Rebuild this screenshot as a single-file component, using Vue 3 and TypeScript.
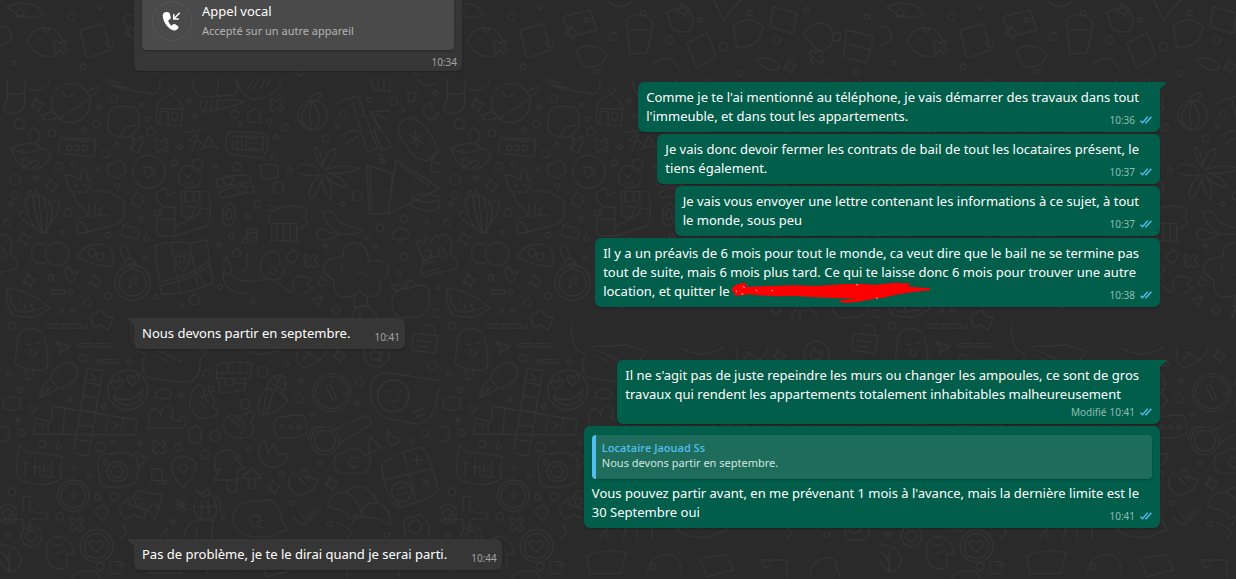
<script setup lang="ts">
interface Message {
  id: number
  side: 'in' | 'out'
  time: string
  lines?: string[]
  call?: { title: string; detail: string }
  quote?: { author: string; text: string }
  first?: boolean
  edited?: boolean
  redacted?: boolean
}

const messages: Message[] = [
  { id: 1, side: 'in', time: '10:34', first: true, call: { title: 'Appel vocal', detail: 'Accepté sur un autre appareil' } },
  {
    id: 2, side: 'out', time: '10:36', first: true,
    lines: ["Comme je te l'ai mentionné au téléphone, je vais démarrer des travaux dans tout", "l'immeuble, et dans tout les appartements."],
  },
  {
    id: 3, side: 'out', time: '10:37',
    lines: ['Je vais donc devoir fermer les contrats de bail de tout les locataires présent, le', 'tiens également.'],
  },
  {
    id: 4, side: 'out', time: '10:37',
    lines: ['Je vais vous envoyer une lettre contenant les informations à ce sujet, à tout', 'le monde, sous peu'],
  },
  {
    id: 5, side: 'out', time: '10:38', redacted: true,
    lines: [
      'Il y a un préavis de 6 mois pour tout le monde, ca veut dire que le bail ne se termine pas',
      'tout de suite, mais 6 mois plus tard. Ce qui te laisse donc 6 mois pour trouver une autre',
      'location, et quitter le',
    ],
  },
  { id: 6, side: 'in', time: '10:41', first: true, lines: ['Nous devons partir en septembre.'] },
  {
    id: 7, side: 'out', time: '10:41', first: true, edited: true,
    lines: ["Il ne s'agit pas de juste repeindre les murs ou changer les ampoules, ce sont de gros", 'travaux qui rendent les appartements totalement inhabitables malheureusement'],
  },
  {
    id: 8, side: 'out', time: '10:41',
    quote: { author: 'Locataire Jaouad Ss', text: 'Nous devons partir en septembre.' },
    lines: ["Vous pouvez partir avant, en me prévenant 1 mois à l'avance, mais la dernière limite est le", '30 Septembre oui'],
  },
  { id: 9, side: 'in', time: '10:44', first: true, lines: ['Pas de problème, je te le dirai quand je serai parti.'] },
]

const dots: [number, number, number][] = [
  [58, 372, 16], [155, 399, 11], [289, 372, 11], [342, 296, 12], [297, 320, 7], [424, 314, 6], [443, 357, 7], [452, 395, 12],
  [252, 390, 7], [349, 436, 7], [317, 460, 12], [176, 499, 11], [220, 494, 7], [293, 508, 6], [45, 539, 16], [107, 535, 7],
  [45, 586, 11], [32, 612, 6], [20, 669, 11], [203, 638, 12], [352, 557, 7], [424, 656, 7], [472, 638, 10], [323, 706, 8],
  [187, 698, 6], [440, 716, 7], [435, 774, 6], [152, 833, 8], [324, 888, 11], [263, 909, 11], [185, 930, 6], [217, 930, 6],
  [469, 891, 7], [545, 918, 6], [583, 900, 15], [660, 860, 7], [657, 736, 7], [710, 759, 12], [695, 708, 8], [743, 648, 6],
  [772, 612, 11], [835, 562, 16], [870, 510, 7], [820, 470, 7], [828, 412, 7], [855, 382, 11], [808, 364, 7], [705, 342, 12],
  [720, 372, 6], [567, 303, 7], [584, 348, 6], [540, 440, 7], [522, 489, 9], [711, 501, 12], [646, 498, 6], [760, 905, 7],
  [1030, 342, 11], [1013, 380, 6], [977, 416, 11], [1108, 300, 7], [1181, 304, 12], [1210, 328, 6], [1307, 280, 7],
  [1142, 470, 7], [1148, 484, 6], [1072, 587, 15], [1028, 612, 6], [1140, 683, 11], [1212, 657, 11], [1281, 664, 6],
  [1098, 713, 6], [1124, 739, 6], [1212, 770, 11], [1197, 818, 7], [966, 846, 12], [1315, 862, 6], [1312, 940, 12], [976, 739, 6],
  [35, 978, 11], [249, 1075, 11], [295, 1085, 6], [387, 1085, 7], [25, 1120, 7], [60, 1170, 8], [208, 1199, 7], [97, 1225, 11],
  [312, 1220, 7], [55, 1260, 6], [64, 1298, 10], [127, 1333, 11], [176, 1340, 7], [302, 1341, 15], [340, 1328, 6], [420, 1328, 6],
  [534, 1341, 11], [545, 1186, 7], [620, 1122, 12], [633, 1167, 8], [736, 1213, 15], [788, 1115, 16], [645, 1308, 16],
  [860, 1091, 7], [904, 1143, 6], [895, 1194, 14], [937, 1243, 7], [1078, 1147, 12], [1072, 1209, 7], [747, 1346, 7],
  [616, 1363, 13], [844, 1422, 7], [36, 1475, 11], [222, 1405, 6], [268, 1426, 6], [294, 1491, 9], [343, 1490, 12],
  [179, 1550, 11], [24, 1605, 7], [519, 1567, 7], [669, 1552, 6], [878, 1509, 7], [989, 1573, 7], [1160, 1605, 8],
  [960, 1391, 6], [1275, 1300, 11], [1235, 1324, 6], [1298, 1099, 14], [35, 1550, 10], [1190, 1510, 8],
  [60, 40, 12], [140, 90, 7], [215, 50, 11], [300, 20, 7], [330, 130, 11], [440, 60, 7], [520, 110, 12], [610, 40, 8],
  [690, 120, 11], [780, 60, 7], [850, 140, 12], [930, 40, 7], [1010, 120, 11], [1100, 30, 7], [1190, 110, 12], [1280, 50, 8],
  [40, 190, 7], [250, 200, 8], [470, 215, 7], [900, 220, 8], [1250, 215, 9], [300, 1700, 11], [640, 1700, 8], [980, 1690, 12],
]

const sparks: [number, number][] = [
  [112, 316], [155, 558], [73, 716], [88, 842], [286, 845], [1018, 1068], [822, 1463], [994, 1450], [395, 100], [730, 30], [1050, 200],
]

const crosses: [number, number][] = [
  [485, 436], [830, 315], [932, 783], [477, 1342], [230, 1573], [180, 140], [1130, 170],
]
</script>

<template>
  <main class="chat">
    <svg class="wallpaper" aria-hidden="true">
      <defs>
        <pattern id="doodles" width="440" height="579" patternUnits="userSpaceOnUse" viewBox="0 0 1320 1737">
          <g class="doodle">
            <circle v-for="(d, i) in dots" :key="'d' + i" :cx="d[0]" :cy="d[1]" :r="d[2]" />
            <path
              v-for="(s, i) in sparks"
              :key="'s' + i"
              :transform="`translate(${s[0]} ${s[1]})`"
              d="M-4-22Q0-8 20-4Q8 2 5 20Q-2 7-20 4Q-8-4-4-22Z"
            />
            <path
              v-for="(c, i) in crosses"
              :key="'c' + i"
              :transform="`translate(${c[0]} ${c[1]})`"
              d="M-14-20L0-10L12-20L20-12L11 0L22 12L12 20L0 11L-12 21L-20 12L-11 0L-22-12Z"
            />
            <g transform="translate(0 240)">
              <path d="M22 0V50Q20 65 12 80Q10 102 35 101Q65 98 74 75L75 0M22 40Q45 48 73 38M80 22Q105 42 145 15L148 0" />
              <circle cx="213" cy="69" r="58" />
              <path d="M268 30Q295 18 298 24Q280 55 180 112Q130 125 126 115Q130 100 158 94M187 35Q205 65 225 35M155 94L185 118" />
              <path d="M335 85Q365 75 405 83Q422 105 418 140Q412 152 385 172Q350 176 325 152Q318 110 335 85ZM362 170Q370 140 390 138Q410 135 418 130" />
              <path d="M318 5Q360 30 400 32L465 42Q485 20 480 0M340 15L385 25M325 0L365 12" />
              <path d="M470 85L468 130L542 140L548 88ZM470 85Q465 65 510 42Q545 60 550 88M510 42L505 30L520 22L530 32L512 42M480 130V95H505V132M515 100H532V120H515Z" />
              <path d="M580 0Q575 40 610 52L700 45Q720 30 708 0M655 0L652 45M605 60Q595 90 612 96Q690 85 732 65Q700 55 655 60M620 60L615 92M635 60L632 90M650 60V85" />
              <path d="M710 0Q720 40 755 58Q815 58 838 15L842 0M745 25L755 5M760 25L775 0M780 25L795 0M800 22L810 0" />
              <path d="M35 205Q45 260 95 268Q145 260 152 225Q145 210 125 205Q110 190 100 190Q60 190 35 205Q70 230 125 205M90 175Q80 155 103 142Q125 160 117 178L107 190H95ZM65 240L80 232L92 248L76 260ZM95 250Q105 230 118 248Q112 262 98 262" />
              <path d="M182 172L285 178Q290 200 280 230L178 220Q172 195 182 172ZM188 178L275 185M200 203a8 8 0 1 0 16 0a8 8 0 1 0-16 0M223 203a8 8 0 1 0 16 0a8 8 0 1 0-16 0M247 203a8 8 0 1 0 16 0a8 8 0 1 0-16 0" />
              <path d="M395 170L410 180L425 168L428 188L415 218L390 208L402 195ZM555 158L615 147M575 145L590 160L565 185M595 165L575 215M590 180L605 190M605 210L625 168L655 210M615 200H638" />
              <path d="M690 155Q675 165 677 200Q680 225 705 225L785 235Q805 215 805 185Q803 162 780 158ZM698 168L790 170L788 212L700 208ZM710 172V205M725 172V205M710 188H725M738 174V207M748 174L772 177M750 190H768M750 206H772" />
              <path d="M325 255Q332 245 345 252Q355 235 368 248Q380 255 375 270Q380 285 362 288Q350 300 340 288Q320 290 325 272Z" />
              <circle cx="447" cy="275" r="49" />
              <path d="M430 262Q450 258 467 272Q455 290 438 292Q435 278 430 262Z" />
              <path d="M195 285L215 288L240 300L245 268Q258 260 262 300L272 300Q275 330 250 338Q215 335 208 328ZM220 340Q220 365 250 385L265 408M275 332Q350 330 372 370Q380 420 345 435L235 462Q225 425 240 415Q300 400 325 405M268 375V402M285 372V402M300 402Q300 380 318 376M240 425Q265 435 260 455M222 315L234 318M247 318L258 315" />
              <circle cx="569" cy="290" r="34" /><circle cx="592" cy="254" r="16" />
              <path d="M545 335H620Q635 340 630 400Q635 430 615 440L525 468H475Q465 450 472 410Q475 385 495 382Q470 370 468 350Q475 325 495 325Q505 330 502 350L525 335M545 335Q540 375 550 380H590L600 335M555 335V365H582V335M545 380Q540 410 560 415Q585 410 582 380M600 340V400L525 440M500 380L525 382V460M472 420L525 415M600 385H630M555 285L565 292L575 282M555 305Q570 315 582 305" />
              <path d="M650 300Q680 285 745 285Q758 292 750 305L660 322Q645 312 650 300ZM655 338Q700 315 760 320Q765 330 760 335L670 353Q655 350 655 338M670 300a14 14 0 1 0 28 0a14 14 0 1 0-28 0M712 328a14 14 0 1 0 28 0a14 14 0 1 0-28 0" />
              <path d="M780 258Q805 250 832 258L835 290Q810 300 785 297Q785 280 780 258ZM743 100L765 85L782 92L780 128L745 125Z" />
              <path d="M395 355L412 338L435 358L415 382L395 370ZM370 435L418 448L412 478L362 465Z" />
              <path d="M80 345L90 330L100 340L105 328L115 345M75 360Q85 440 128 460Q160 440 155 380Q135 345 105 345Q85 345 75 360ZM100 350Q105 420 128 460M128 352Q150 400 138 460M75 395Q55 390 58 405Q75 435 105 438M155 365Q175 355 177 370Q175 410 153 425M128 460L115 350" />
              <path d="M668 400Q670 370 690 370Q710 385 705 410Q700 435 682 437Q665 435 668 400ZM678 400Q680 385 690 385Q700 400 693 415Q685 425 680 415Z" />
              <path d="M805 430H895M808 480L895 485M815 430V475M830 432V478M850 435V480M870 435V480M890 435V480M808 425Q800 395 850 380Q880 375 900 382M805 375L830 382M800 392L835 388" />
              <path d="M740 450L772 445L770 480M740 450L742 482M727 482a8 8 0 1 0 16 0a8 8 0 1 0-16 0M755 480a8 8 0 1 0 16 0a8 8 0 1 0-16 0M740 462L771 457" />
              <path d="M0 465Q30 460 35 490L30 515L52 545V565L0 578M0 500Q20 510 18 530L0 535" />
              <path d="M135 495Q110 480 98 505Q88 530 105 545Q120 555 138 547" />
              <circle cx="172" cy="522" r="35" />
              <path d="M230 530Q260 480 320 497Q345 515 338 550Q335 560 315 558Q260 550 230 530ZM265 518a12 12 0 1 0 24 0a12 12 0 1 0-24 0M290 530a11 11 0 1 0 22 0a11 11 0 1 0-22 0" />
              <path d="M362 500Q370 490 380 502L390 535Q380 545 372 535Q358 520 362 500ZM375 550Q380 535 395 538Q410 545 408 560" />
              <circle cx="398" cy="608" r="53" /><circle cx="398" cy="608" r="40" />
              <path d="M388 625L390 602L410 588L408 610ZM388 556a8 8 0 1 0 16 0a8 8 0 1 0-16 0" />
              <path d="M465 498Q510 480 570 490L620 480L638 610Q600 625 545 640L485 642Q470 570 465 498ZM512 488L540 640M568 490L585 570L620 622M480 605Q560 595 625 545M485 615Q560 605 630 555M548 575Q515 540 535 520Q555 508 570 530Q570 555 548 575ZM538 538a10 10 0 1 0 20 0a10 10 0 1 0-20 0M585 570L592 615" />
              <path d="M670 550L678 530L690 555Q700 580 685 582Q670 582 670 560V600Q680 640 745 640M692 580Q700 600 745 605L790 600Q810 590 850 620Q880 650 885 625Q865 605 900 585M740 520V565Q735 580 725 570M780 555Q790 510 825 515Q845 530 838 555L855 565L840 595Q820 605 800 595L785 585ZM810 572a10 10 0 1 0 20 0a10 10 0 1 0-20 0M860 525L880 508L897 525L880 550L858 540Z" />
              <path d="M195 570L205 558L215 578L235 575L215 608L200 595ZM155 630H195V642H155ZM205 638a7 7 0 1 0 14 0a7 7 0 1 0-14 0" />
              <path d="M25 625Q10 660 38 705Q75 715 110 710L150 685Q100 635 25 625ZM32 638Q25 670 55 695Q90 700 130 682M55 655L62 668M75 668V680M92 672L100 690M72 690L80 680" />
            </g>
            <g transform="translate(900 240)">
              <circle cx="38" cy="105" r="44" />
              <path d="M38 62Q0 80 8 130L38 150Q75 130 38 62ZM38 62Q20 100 38 150M30 58Q35 42 60 38L65 45L48 60M215 0L220 30L270 35V0M235 0V30M252 0V30M355 0Q380 28 410 5" />
              <path d="M105 75Q130 55 175 48L232 205L202 217L155 60M180 108L195 102M195 162L212 155M210 95L275 200L245 212L222 150L240 148L210 95L270 92M215 100L260 118M130 165Q155 148 180 155M140 190L178 165" />
              <path d="M395 68Q370 70 370 95Q375 120 400 118L418 98Q395 102 395 68ZM323 38L348 40L340 62L325 65Z" />
              <path d="M295 140Q310 110 340 115Q385 135 412 205Q400 235 380 242Q340 240 315 190Q290 165 295 140ZM385 240L415 205M395 240L420 212L432 228M330 165L370 190M345 150L350 200M332 190L370 160" />
              <path d="M68 265Q35 220 48 198Q65 215 68 265Q75 215 105 205Q115 225 75 270Q120 250 178 265Q145 285 80 278Q130 290 142 322Q105 320 75 285Q100 310 93 360Q65 330 66 290Q55 350 30 358Q20 320 60 285Q25 290 0 280M60 272Q30 245 0 255" />
              <path d="M200 255L278 280L265 400L208 402ZM288 238L420 325L265 402ZM300 255L390 320M210 270L215 395M335 350Q370 335 420 350Q425 385 400 392Q360 395 335 375ZM340 355Q370 375 415 360M395 250Q405 240 415 250Q435 265 415 277Q390 275 392 265Z" />
              <path d="M70 395Q100 385 110 415Q120 435 190 450Q165 470 120 460Q80 490 55 475Q40 455 65 445Q95 465 120 460Q75 440 70 395ZM0 380Q30 385 15 410L22 430L0 445M278 460Q300 435 320 450Q335 465 318 477Q290 485 278 475Z" />
              <path d="M130 530Q125 495 160 488Q205 490 205 545Q240 530 265 560Q270 595 235 605Q255 640 215 650Q185 650 180 630Q165 655 125 650Q95 640 103 600Q70 590 72 555Q85 530 125 532ZM130 580Q120 560 130 550M165 585Q185 570 205 590M165 645L160 680H205L200 645M155 720Q160 680 190 675Q225 690 235 720M180 720V690" />
              <path d="M350 492L355 480L372 492L378 470L392 485L410 465L425 478L450 465L455 515L372 540L350 492M372 540L362 580L372 590L470 560Q470 540 458 520M372 515Q385 500 395 520L375 550L405 545M418 505L412 530L440 525M432 505V545M370 580L465 550" />
              <path d="M330 625Q360 605 385 625Q395 660 380 690Q370 715 330 710Q295 725 278 690Q270 650 290 635Q310 620 330 625ZM320 622L315 605L340 602M315 625Q275 640 275 615Q305 612 315 625" />
              <path d="M0 590L35 595L20 615L42 625L0 645M38 655L68 650L55 678ZM95 690L110 678L122 690L108 705Z" />
            </g>
            <g transform="translate(0 930)">
              <path d="M45 160L55 75Q75 45 120 62Q145 90 143 170Q135 185 95 180Q55 175 45 160ZM75 180L82 210Q100 208 102 180M88 128a10 10 0 1 0 20 0a10 10 0 1 0-20 0M80 105H92M108 100H118" />
              <path d="M145 43H190V55H145ZM198 43H243V55H198ZM250 50a6 6 0 1 0 12 0M235 100H275V112H235ZM285 100H330V112H285ZM310 148H355V160H310ZM165 95L210 110L180 130L185 112ZM270 20L305 0L320 20L340 25L325 60L300 45L282 55Z" />
              <path d="M118 265Q130 215 150 205L175 235ZM150 205Q165 165 205 155Q240 170 230 205Q205 230 175 235M118 265L148 235" />
              <path d="M262 175L308 182L265 438L220 430ZM255 218L300 225M248 258L293 265M240 300L287 308M235 345L280 350M228 388L272 395M155 288L412 330L405 375L100 372L108 325L155 335ZM195 295L188 375M325 320L318 362M370 325L363 370M145 330V370M270 190L290 205L272 212M112 342H130V355M335 335L355 345L335 358" />
              <circle cx="383" cy="240" r="60" />
              <path d="M350 238Q325 220 340 210L352 218L362 205Q378 215 350 238ZM398 228Q372 208 388 195L400 205L412 193Q428 205 398 228ZM340 255Q380 290 430 240Q425 285 380 285Q345 280 340 255Z" />
              <path d="M395 40Q390 70 400 95Q410 130 435 130Q420 175 440 200Q500 215 565 218Q605 200 600 150L620 125L560 105L455 110M475 122L545 155M465 135L510 158" />
              <path d="M650 165Q690 150 755 160L752 205H650ZM650 190H755M685 160V190M720 158V190M655 205L660 250L735 240V205M675 205V225H700V205M705 205V220H740" />
              <path d="M890 115Q885 165 915 175Q975 150 985 110M915 125L960 150M910 150L930 125M725 115Q790 150 850 112" />
              <path d="M775 290Q780 240 805 235Q860 250 862 275Q835 310 790 315Q770 305 775 290ZM800 235Q810 195 845 195Q870 215 845 255M815 220L850 240M825 205L858 225M840 200L825 240M800 240L790 310M820 245L800 310" />
              <path d="M570 290Q570 240 595 222L615 235L605 265L630 250L645 275L635 290Q660 300 650 315Q610 335 585 315ZM610 250L625 280M600 275L615 290" />
              <path d="M670 340Q680 305 720 320L750 305Q775 315 750 335Q770 350 755 375Q720 395 690 378Q668 365 670 340ZM690 325L720 350M705 315L735 345M720 375L740 350" />
              <path d="M445 355L450 330Q440 300 465 295Q480 300 482 315Q485 285 510 285Q525 300 515 325L540 335L545 315L560 335L550 355ZM465 260Q465 245 485 240Q495 225 510 245Q520 255 505 265Q480 270 465 260ZM565 362L590 345L605 365L600 400L570 398Z" />
              <circle cx="995" cy="248" r="57" /><circle cx="995" cy="248" r="48" />
              <path d="M975 230L990 222L1010 265L998 272L985 240ZM995 205V215M1035 248H1028M960 248H952" />
              <path d="M1110 240Q1115 190 1165 188L1335 215Q1310 235 1310 270Q1305 330 1250 342L1160 325Q1110 300 1110 240Z" />
              <circle cx="1180" cy="258" r="48" />
              <path d="M1135 258a45 45 0 1 1 80 25M1160 245H1170M1195 245H1205M1160 270Q1180 285 1200 265M1235 310L1270 295M1245 325L1275 310" />
              <circle cx="1130" cy="132" r="38" />
              <path d="M1110 132L1125 115L1130 128L1148 125L1138 140L1145 155L1128 145L1115 150ZM1240 70L1315 78L1305 130L1235 120ZM1265 65Q1270 35 1300 48L1305 75M1255 90L1295 98M1255 108L1290 112" />
              <path d="M825 330Q830 318 905 315Q925 325 918 370Q905 385 835 385Q815 370 825 330ZM840 350a6 6 0 1 0 12 0a6 6 0 1 0-12 0M865 350a6 6 0 1 0 12 0a6 6 0 1 0-12 0M892 350a6 6 0 1 0 12 0a6 6 0 1 0-12 0" />
              <circle cx="975" cy="392" r="42" /><circle cx="975" cy="392" r="31" />
              <path d="M1000 360L1095 318Q1120 325 1110 345L1018 400M925 390Q925 345 970 350M1105 430L1110 380L1145 415ZM1165 360Q1155 390 1175 405Q1195 405 1202 385Q1175 390 1165 360Z" />
              <path d="M10 270Q10 255 60 265L62 295Q40 305 10 295ZM0 350Q30 345 30 375Q25 400 0 392" />
              <path d="M60 405L80 425Q130 430 188 440Q185 460 180 470L185 505Q140 540 60 510Q40 480 60 405ZM75 455V500M65 458H88M105 450V495M100 470H120V500M132 460V500L155 502V455M132 480H155" />
              <path d="M295 445Q305 430 335 432L365 425L410 440Q420 500 405 520Q350 540 305 525Q290 480 295 445ZM395 440L410 425L430 440L445 445L425 460L415 478" />
              <circle cx="352" cy="485" r="30" /><circle cx="352" cy="485" r="18" /><circle cx="317" cy="457" r="7" />
              <path d="M550 532Q500 480 520 450Q550 425 585 455Q600 480 550 532ZM538 475a12 12 0 1 0 24 0a12 12 0 1 0-24 0M455 478H487V512H455ZM478 512H498V522H478" />
              <path d="M645 440Q665 415 695 422L725 445L700 440L735 475Q700 475 715 510L640 510L660 475L645 480ZM680 515L685 545H710V515M725 505L755 475L785 505ZM745 508V535H765V508" />
              <path d="M775 430Q775 400 795 390L805 430L820 400L835 435L865 430Q860 465 830 470Q790 480 775 430ZM865 520Q865 485 895 490L920 475L925 500L955 510Q945 550 895 555Q870 545 865 520ZM895 500L915 525M910 495L930 515" />
              <path d="M1003 450Q1005 430 1030 430Q1050 410 1080 420Q1095 440 1110 440Q1115 475 1090 490H1020Q995 475 1003 450ZM1075 445Q1050 435 1045 460Q1055 480 1075 468" />
              <path d="M1145 470Q1150 440 1260 412Q1285 415 1315 540Q1310 560 1200 592Q1165 595 1145 470ZM1210 430L1250 575M1155 510L1300 475M1175 545a30 30 0 1 0 60 0a30 30 0 1 0-60 0M1235 450H1265M1250 435V465M1265 505L1290 530M1290 505L1265 530M1190 538L1220 530M1190 555L1220 547" />
              <circle cx="220" cy="557" r="47" /><circle cx="220" cy="557" r="37" />
              <path d="M208 560L220 545V565L235 548M70 560H90V605L143 610V625L90 628V655H68V628L0 630M68 605L70 560M282 605L305 585L325 600L312 635Z" />
              <path d="M355 595L385 565L390 585L440 600L435 625L400 615L375 630ZM395 570L410 542L487 555L465 630L445 600M405 575a11 11 0 1 0 22 0a11 11 0 1 0-22 0M435 610L460 580L478 595" />
              <path d="M525 585L560 585M545 565V605M530 570L558 600M558 570L532 600M585 540L605 550L625 535L630 555L610 560ZM590 565Q570 610 600 625H640Q660 605 640 565M605 570V620M625 570V620M590 590H650M640 555Q670 570 660 600M550 690Q555 640 590 630L640 632Q635 660 635 690M590 690V650" />
              <path d="M700 640Q695 580 750 575L815 570Q850 600 845 630L865 662Q830 665 815 680Q720 690 700 640ZM750 625Q765 605 780 620Q780 650 760 650Q750 640 750 625ZM770 635L800 630M770 645L790 655" />
              <path d="M880 620L905 645L955 590M900 610L915 622M915 645L965 595M985 590Q985 550 1035 545Q1080 570 1085 620L1070 615L1050 625L1035 605L985 590ZM1040 545Q1070 520 1100 535Q1130 555 1130 580M1085 620Q1085 570 1135 580Q1175 600 1172 645L1130 625L1085 620M1070 620L1055 645M1010 640Q1050 650 1055 670L1040 690" />
              <circle cx="23" cy="612" r="28" /><circle cx="23" cy="612" r="15" /><circle cx="94" cy="678" r="31" /><circle cx="94" cy="678" r="17" />
              <circle cx="290" cy="708" r="49" /><circle cx="290" cy="708" r="37" />
              <path d="M290 725Q260 705 275 690L290 698L305 690Q320 708 290 725ZM0 705Q45 700 65 745Q60 780 30 787M0 725Q30 740 30 787M0 755L15 780M30 715L25 785M140 720Q140 685 175 680Q215 685 222 730L200 735V770Q175 785 150 765Q135 745 140 720ZM160 705H185M165 735L190 725M330 755H365V790H330ZM375 765H350M215 807Q225 775 285 785Q300 795 298 807" />
              <path d="M1210 640Q1215 615 1240 622L1260 610L1285 640Q1295 680 1270 690H1220ZM1225 650a20 20 0 1 0 40 0a20 20 0 1 0-40 0M365 640L380 665L360 690M480 680L500 655V685" />
              <path d="M440 740Q500 710 560 730L540 790H450ZM620 790Q630 730 700 735Q730 760 720 790M780 745L860 735L880 780L800 800ZM960 750H1040V800M1110 790Q1120 740 1180 745L1200 800" />
            </g>
            <path d="M80 120Q120 60 170 95Q210 130 160 170Q100 175 80 120ZM240 90L310 70L330 150L260 175ZM370 50L450 30L470 90L390 110ZM410 150Q450 120 500 160Q490 210 430 200ZM560 60Q600 20 640 70L620 160H570ZM570 90H635M680 40Q740 0 760 60Q760 110 700 90ZM740 130L800 100L830 170L770 205ZM880 80Q920 40 970 80Q960 150 890 140ZM1000 20L1070 40L1060 100L990 80ZM1090 100Q1130 50 1170 80Q1200 150 1130 150ZM1220 90L1300 110L1280 190L1210 170ZM1220 130L1290 150M0 80Q30 70 35 120L0 140M20 20Q100 -10 130 45Q80 70 20 20ZM500 0Q540 40 580 0M820 0L850 60L900 0M640 190Q690 150 720 210M950 180Q990 160 1020 200Q990 230 950 180Z" />
          </g>
        </pattern>
      </defs>
      <rect width="100%" height="100%" fill="url(#doodles)" />
    </svg>

    <ol class="thread">
      <li v-for="m in messages" :key="m.id" class="bubble" :class="[m.side, { first: m.first, edited: m.edited, 'has-call': m.call, 'has-quote': m.quote }]">
        <div v-if="m.call" class="call">
          <span class="call-icon">
            <svg width="20" height="20" viewBox="0 0 20 20" aria-hidden="true">
              <path fill="#fff" d="M3.2 1.2C1.3 1.8.6 3.3.8 5.3c.5 5.300 4 10.900 9 13.500 1.700.9 3.800.9 5.200-.2.900-.7 1.600-1.700 1.400-2.600-.1-.5-.5-.9-.9-1.200l-2.300-1.600c-.8-.5-1.700-.4-2.300.2l-1 .9c-.4.300-.8.200-1.100-.1-1.100-1.100-2-2.600-2.500-4.200-.1-.5 0-.8.400-1l1.200-.7c.7-.4 1-1.200.8-2L7.900 3C7.500 1.400 5.700.5 3.200 1.200Z" />
              <path fill="none" stroke="#fff" stroke-width="1.500" stroke-linecap="round" stroke-linejoin="round" d="M17.300 2.300 11.800 7.800M11.700 3.400V8h4.600" />
            </svg>
          </span>
          <span class="call-text">
            <span class="call-title">{{ m.call.title }}</span>
            <span class="call-detail">{{ m.call.detail }}</span>
          </span>
        </div>
        <blockquote v-if="m.quote" class="quote">
          <cite>{{ m.quote.author }}</cite>
          <p>{{ m.quote.text }}</p>
        </blockquote>
        <p v-if="m.lines" class="text">
          <span v-for="(line, i) in m.lines" :key="i" class="line">
            {{ line }}
            <svg v-if="m.redacted && i === m.lines.length - 1" class="scribble" width="200" height="22" viewBox="450 158 600 66" aria-hidden="true">
              <path fill="#fe0000" d="M450 176L462 166L484 160L494 164L490 172L560 170L640 168L700 170L780 165L830 163L880 166L940 160L988 163L975 171L1000 174L1044 177V183L1000 187L950 195L900 206L868 210L840 216L800 220L768 219L780 213L822 208L760 206L700 204L640 200L580 201L530 198L500 195L470 199L452 196L462 190L450 186Z" />
              <path stroke="#fff" stroke-width="2" fill="none" d="M463 183V189M483 170L488 176M520 181L526 186M568 184H574M882 204L887 208M478 194H484M822 165L828 168" />
            </svg>
          </span>
        </p>
        <span class="meta">
          <span v-if="m.edited">Modifié</span>
          <time>{{ m.time }}</time>
          <svg v-if="m.side === 'out'" class="ticks" width="12" height="8" viewBox="0 0 12 8" role="img" aria-label="Lu">
            <path fill="none" stroke="#53bdeb" stroke-width="1.400" d="M.5 4.800 2.500 6.800 7.800 .8M5.200 6.200 6 6.800 11.400 .8" />
          </svg>
        </span>
      </li>
    </ol>
  </main>
</template>

<style>
body {
  margin: 0;
  background: #2a2a2a;
}
</style>

<style scoped>
.chat {
  position: relative;
  height: 100vh;
  overflow: hidden;
  background: #2a2a2a;
  color: #fff;
  font-family: "Segoe UI", "Noto Sans", "Open Sans", sans-serif;
  font-size: 13px;
  line-height: 19px;
}

.wallpaper {
  position: absolute;
  inset: 0;
  width: 100%;
  height: 100%;
}

.doodle {
  fill: none;
  stroke: #333;
  stroke-width: 4;
  stroke-linecap: round;
  stroke-linejoin: round;
}

.thread {
  position: relative;
  display: flex;
  flex-direction: column;
  justify-content: flex-end;
  gap: 2px;
  box-sizing: border-box;
  height: 100%;
  margin: 0;
  padding: 0 76px 9px 134px;
  list-style: none;
}

.bubble {
  position: relative;
  flex: none;
  display: grid;
  padding: 6px 8px;
  border-radius: 6px;
  box-shadow: 0 1px 2px rgb(0 0 0 / 25%);
  white-space: nowrap;
}

.bubble.first {
  margin-top: 9px;
}

.out {
  align-self: flex-end;
  background: #005e4a;
}

.in {
  align-self: flex-start;
  grid-template-columns: auto auto;
  column-gap: 24px;
  padding-right: 5px;
  background: #363636;
}

.out.first {
  border-top-right-radius: 0;
}

.in.first {
  border-top-left-radius: 0;
}

.first::before {
  content: "";
  position: absolute;
  top: 0;
  width: 7px;
  height: 7px;
}

.out.first::before {
  left: 100%;
  background: #005e4a;
  clip-path: polygon(0 0, 100% 0, 0 100%);
}

.in.first::before {
  right: 100%;
  background: #363636;
  clip-path: polygon(0 0, 100% 0, 100% 100%);
}

.text {
  margin: 0;
}

.out .text {
  grid-area: 1 / 1;
  padding-right: 13px;
}

.line {
  display: flex;
  height: 19px;
}

.scribble {
  flex: none;
  margin-left: 2px;
}

.meta {
  display: flex;
  align-items: center;
  align-self: end;
  justify-self: end;
  gap: 3px;
  color: #a3a3a3;
  font-size: 10px;
  line-height: 12px;
}

.out .meta {
  grid-area: 1 / 1;
  color: #8fbdb2;
}

.ticks {
  margin-left: 2px;
}

.out.edited .meta {
  grid-area: 2 / 1;
  margin-top: 2px;
}

.out.has-quote .text,
.out.has-quote .meta {
  grid-area: 2 / 1;
}

.has-quote {
  padding-top: 9px;
}

.quote {
  margin: 0 0 5px;
  padding: 5px 6px 9px;
  border-left: 4px solid #53bdeb;
  border-radius: 4px;
  background: #1e6c5b;
  box-shadow: 0 1px 2px rgb(0 0 0 / 25%);
  color: #d3e4e0;
  font-size: 11px;
  line-height: 15px;
}

.quote cite {
  color: #53bdeb;
  font-family: "Segoe UI", "Open Sans", sans-serif;
  font-style: normal;
  font-weight: 600;
}

.quote p {
  margin: 0;
}

.bubble.has-call {
  grid-template-columns: auto;
  width: 315px;
  padding: 8px 5px 3px 8px;
}

.call {
  display: flex;
  align-items: center;
  gap: 10px;
  margin-right: 3px;
  padding: 9px 10px;
  border-radius: 4px;
  background: #4a4a4a;
  box-shadow: 0 1px 2px rgb(0 0 0 / 30%);
}

.call-icon {
  display: grid;
  place-items: center;
  width: 40px;
  height: 40px;
  border: 1px solid #555;
  border-radius: 50%;
  box-sizing: border-box;
}

.call-text {
  display: grid;
}

.call-detail {
  color: #b4b4b4;
  font-size: 11px;
}

.has-call .meta {
  margin-top: 6px;
}
</style>
